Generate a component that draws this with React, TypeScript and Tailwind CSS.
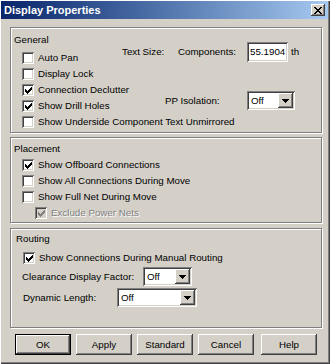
import React from "react";

const raised =
  "bg-[#d4d0c8] shadow-[inset_-1px_-1px_0_#404040,inset_1px_1px_0_#ffffff,inset_-2px_-2px_0_#808080,inset_2px_2px_0_#d4d0c8]";
const sunken =
  "shadow-[inset_1px_1px_0_#808080,inset_-1px_-1px_0_#ffffff,inset_2px_2px_0_#404040,inset_-2px_-2px_0_#d4d0c8]";

function CheckMark({ color = "#000" }: { color?: string }) {
  return (
    <svg width="7" height="7" viewBox="0 0 7 7" shapeRendering="crispEdges">
      <path
        fill={color}
        d="M0 2h1v3H0z M1 3h1v3H1z M2 4h1v3H2z M3 3h1v3H3z M4 2h1v3H4z M5 1h1v3H5z M6 0h1v3H6z"
      />
    </svg>
  );
}

function Check({
  label,
  checked = false,
  disabled = false,
}: {
  label: string;
  checked?: boolean;
  disabled?: boolean;
}) {
  return (
    <div className="flex items-center h-[16px] whitespace-nowrap">
      <div
        className={`shrink-0 w-[12px] h-[12px] flex items-center justify-center ${sunken} ${
          disabled ? "bg-[#d4d0c8]" : "bg-white"
        }`}
      >
        {checked && <CheckMark color={disabled ? "#808080" : "#000"} />}
      </div>
      <span
        className={`shrink-0 ml-[4px] leading-[12px] ${
          disabled ? "text-[#808080] [text-shadow:1px_1px_0_#ffffff]" : "text-black"
        }`}
      >
        {label}
      </span>
    </div>
  );
}

function Select({ value, width }: { value: string; width: string }) {
  return (
    <div className={`shrink-0 ${width} h-[19px] bg-white p-[2px] flex ${sunken}`}>
      <div className="flex-1 pl-[2px] flex items-center leading-[12px]">{value}</div>
      <div className={`w-[15px] h-full flex items-center justify-center ${raised}`}>
        <svg width="7" height="4" viewBox="0 0 7 4" shapeRendering="crispEdges">
          <path fill="#000" d="M0 0h7v1H0z M1 1h5v1H1z M2 2h3v1H2z M3 3h1v1H3z" />
        </svg>
      </div>
    </div>
  );
}

function Button({ label, def = false, className = "" }: { label: string; def?: boolean; className?: string }) {
  return (
    <div className={`w-[56px] h-[21px] ${def ? "border border-black" : ""} ${className}`}>
      <div className={`w-full h-full flex items-center justify-center leading-[12px] ${raised}`}>
        {label}
      </div>
    </div>
  );
}

function Group({ className = "", children }: { className?: string; children: React.ReactNode }) {
  return (
    <div
      className={`ml-[10px] w-[312px] border border-[#808080] shadow-[inset_1px_1px_0_#ffffff,1px_1px_0_#ffffff] ${className}`}
    >
      {children}
    </div>
  );
}

export default function App() {
  return (
    <div
      className="w-[330px] h-[364px] bg-[#d4d0c8] overflow-hidden text-[9.75px] text-black shadow-[inset_1px_1px_0_#ffffff,inset_-1px_-1px_0_#404040,inset_-2px_-2px_0_#808080]"
      style={{ fontFamily: '"Liberation Sans", Arial, sans-serif' }}
    >
      {/* Title bar */}
      <div className="mt-[1px] ml-[1px] mr-[2px] h-[18px] flex items-center justify-between bg-linear-to-r from-[#0a246a] to-[#a6caf0]">
        <span className="pl-[3px] text-[11px] font-bold text-white leading-[14px]">
          Display Properties
        </span>
        <div className={`mr-[3px] w-[14px] h-[12px] flex items-center justify-center ${raised}`}>
          <svg width="8" height="7" viewBox="0 0 8 7" shapeRendering="crispEdges">
            <path
              fill="#000"
              d="M0 0h2v1H0z M6 0h2v1H6z M1 1h2v1H1z M5 1h2v1H5z M2 2h4v1H2z M3 3h2v1H3z M2 4h4v1H2z M1 5h2v1H1z M5 5h2v1H5z M0 6h2v1H0z M6 6h2v1H6z"
            />
          </svg>
        </div>
      </div>

      {/* General */}
      <Group className="mt-[8px] h-[106px] pt-[6px] pl-[3px]">
        <div className="flex">
          <div className="w-[108px] shrink-0 flex flex-col">
            <div className="h-[12px] leading-[12px]">General</div>
            <div className="mt-[4px] ml-[8px]">
              <Check label="Auto Pan" />
              <Check label="Display Lock" />
              <Check label="Connection Declutter" checked />
              <Check label="Show Drill Holes" checked />
            </div>
          </div>
          <div className="mt-[8px] flex flex-col">
            <div className="flex items-center h-[20px] whitespace-nowrap">
              <span className="w-[56px] shrink-0 leading-[12px]">Text Size:</span>
              <span className="w-[69px] shrink-0 leading-[12px]">Components:</span>
              <div
                className={`shrink-0 w-[41px] h-[20px] bg-white overflow-hidden flex items-center pl-[3px] ${sunken}`}
              >
                <span className="leading-[12px] whitespace-nowrap">55.1904</span>
              </div>
              <span className="ml-[3px] leading-[12px]">th</span>
            </div>
            <div className="mt-[29px] flex items-center h-[19px] whitespace-nowrap">
              <span className="pl-[43px] w-[125px] shrink-0 leading-[12px]">PP Isolation:</span>
              <Select value="Off" width="w-[48px]" />
            </div>
          </div>
        </div>
        <div className="ml-[8px]">
          <Check label="Show Underside Component Text Unmirrored" />
        </div>
      </Group>

      {/* Placement */}
      <Group className="mt-[4px] h-[86px] pt-[5px] pl-[3px]">
        <div className="h-[12px] leading-[12px]">Placement</div>
        <div className="mt-[2px] ml-[8px]">
          <Check label="Show Offboard Connections" checked />
          <Check label="Show All Connections During Move" />
          <Check label="Show Full Net During Move" />
          <div className="ml-[13px]">
            <Check label="Exclude Power Nets" checked disabled />
          </div>
        </div>
      </Group>

      {/* Routing */}
      <Group className="mt-[5px] h-[100px] pt-[4px] pl-[5px]">
        <div className="h-[12px] leading-[12px]">Routing</div>
        <div className="mt-[5px] ml-[7px]">
          <Check label="Show Connections During Manual Routing" checked />
        </div>
        <div className="mt-[1px] ml-[6px] flex items-center h-[19px] whitespace-nowrap">
          <span className="w-[121px] shrink-0 leading-[12px]">Clearance Display Factor:</span>
          <Select value="Off" width="w-[49px]" />
        </div>
        <div className="mt-[2px] ml-[7px] flex items-center h-[19px] whitespace-nowrap">
          <span className="w-[94px] shrink-0 leading-[12px]">Dynamic Length:</span>
          <Select value="Off" width="w-[80px]" />
        </div>
      </Group>

      {/* Buttons */}
      <div className="mt-[6px] ml-[15px] flex">
        <Button label="OK" def />
        <Button label="Apply" className="ml-[5px]" />
        <Button label="Standard" className="ml-[5px]" />
        <Button label="Cancel" className="ml-[5px]" />
        <Button label="Help" className="ml-[7px]" />
      </div>
    </div>
  );
}
